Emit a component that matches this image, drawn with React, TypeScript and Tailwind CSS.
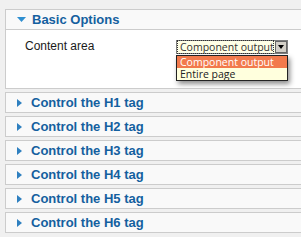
import React from "react";

const rows = ["H1", "H2", "H3", "H4", "H5", "H6"];
const selFont = { fontFamily: '"Open Sans", "Noto Sans", sans-serif' };

function RightTri() {
  return (
    <svg width="5" height="8" viewBox="0 0 5 8" className="block">
      <polygon points="0,0 5,4 0,8" fill="#2f80c0" />
    </svg>
  );
}

function DownTri() {
  return (
    <svg width="9" height="5" viewBox="0 0 9 5" className="block">
      <polygon points="0,0 9,0 4.5,5" fill="#2f8fd0" />
    </svg>
  );
}

export default function App() {
  return (
    <div className="w-[301px] h-[237px] overflow-hidden bg-[#f0f0f0] pt-[9px] pl-[5px]" style={{ fontFamily: '"Liberation Sans", Arial, sans-serif' }}>
      <div className="w-[310px] flex flex-col gap-[3px]">
        <div className="border border-[#cccccc] bg-white">
          <div className="h-[20px] bg-[#f9f9f9] border-b border-[#cccccc] flex items-center pl-[11px]">
            <DownTri />
            <span className="ml-[6px] text-[13px] font-bold text-[#14609f] leading-none">Basic Options</span>
          </div>
          <div className="h-[58px] relative">
            <div className="absolute left-[19px] top-[10px] text-[12px] text-[#1a1a1a] leading-none">Content area</div>
            <div className="absolute left-[170px] top-[10px]">
              <div className="w-[112px] h-[14px] border border-[#7f7f7f] bg-[#ffffe6] flex items-center">
                <div className="w-[95px] h-[12px] ml-[1px] outline outline-1 outline-dotted outline-[#333] flex items-center overflow-hidden">
                  <span className="pl-[2px] text-[10.5px] text-[#333] leading-none whitespace-nowrap" style={selFont}>Component output</span>
                </div>
                <div className="w-[12px] h-[12px] bg-[#d4d0c8] border border-[#666] flex items-center justify-center ml-[2px]">
                  <svg width="6" height="4" viewBox="0 0 6 4"><polygon points="0,0 6,0 3,4" fill="#000" /></svg>
                </div>
              </div>
              <div className="absolute left-[0px] top-[15px] w-[112px] border border-[#222] bg-[#ffffdd] shadow-[2px_3px_5px_rgba(0,0,0,0.45)]">
                <div className="h-[12px] bg-[#f27a4c] text-white text-[10.5px] leading-[12px] pl-[3px] whitespace-nowrap overflow-hidden" style={selFont}>Component output</div>
                <div className="h-[12px] text-[#222] text-[10.5px] leading-[12px] pl-[3px] whitespace-nowrap overflow-hidden" style={selFont}>Entire page</div>
              </div>
            </div>
          </div>
        </div>
        {rows.map((h) => (
          <div key={h} className="h-[21px] border border-[#cccccc] bg-[#f9f9f9] flex items-center pl-[11px]">
            <RightTri />
            <span className="ml-[9px] text-[13px] font-bold text-[#14609f] leading-none">Control the {h} tag</span>
          </div>
        ))}
      </div>
    </div>
  );
}
